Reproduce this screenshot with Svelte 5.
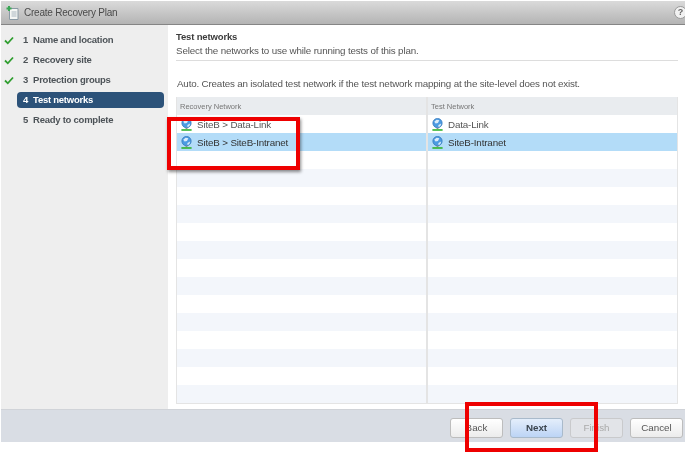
<script>
  const steps = [
    { n: 1, label: 'Name and location', done: true },
    { n: 2, label: 'Recovery site', done: true },
    { n: 3, label: 'Protection groups', done: true },
    { n: 4, label: 'Test networks', active: true },
    { n: 5, label: 'Ready to complete' }
  ];
  const rows = [
    ['SiteB > Data-Link', 'Data-Link'],
    ['SiteB > SiteB-Intranet', 'SiteB-Intranet'],
    ...Array(14).fill(null)
  ];
</script>

{#snippet net()}
  <svg class="net" width="13" height="13" viewBox="0 0 13 14">
    <circle cx="6.500" cy="5.500" r="5" fill="#4c9be2" stroke="#2f74ba" stroke-width="0.8" />
    <path d="M3 4 5.500 2 8.500 2.500 7 5.500 4.500 6ZM7.500 7.500l3-1.500-1 3-2 .8Z" fill="#dcecf9" />
    <rect x="5.500" y="10.500" width="2" height="1.500" fill="#8a8a8a" />
    <rect x="1" y="12" width="11" height="1.800" fill="#35b535" />
  </svg>
{/snippet}

<div class="page">
  <div class="window">
    <header class="title">
      <svg width="13" height="14" viewBox="0 0 13 14">
        <path d="M3.500 2.500h8.500v11h-8.500z" fill="#f4f6f4" stroke="#8a9aa5" />
        <path d="M5.500 6h5M5.500 8h5M5.500 10h5" stroke="#a9b6bf" />
        <path d="M3 0v5M0.500 2.500h5" stroke="#3aa655" stroke-width="2" />
      </svg>
      <span class="title-text">Create Recovery Plan</span>
      <span class="help">?</span>
    </header>
    <div class="body">
      <nav class="side">
        {#each steps as s}
          <div class="step" class:active={s.active}>
            <span class="check">
              {#if s.done}
                <svg width="10" height="9" viewBox="0 0 10 9"><path d="M1 4.500 3.800 7.300 9 1.500" fill="none" stroke="#2f9e2f" stroke-width="1.800" /></svg>
              {/if}
            </span>
            <span class="pill"><span class="num">{s.n}</span>{s.label}</span>
          </div>
        {/each}
      </nav>
      <main class="main">
        <h1>Test networks</h1>
        <p class="sub">Select the networks to use while running tests of this plan.</p>
        <p class="auto">Auto. Creates an isolated test network if the test network mapping at the site-level does not exist.</p>
        <div class="table">
          <div class="row head"><div class="cell">Recovery Network</div><div class="cell">Test Network</div></div>
          {#each rows as r, i}
            <div class="row" class:sel={i === 1} class:odd={i > 1 && i % 2 === 1}>
              <div class="cell">{#if r}{@render net()}{r[0]}{/if}</div>
              <div class="cell">{#if r}{@render net()}{r[1]}{/if}</div>
            </div>
          {/each}
        </div>
      </main>
    </div>
    <footer class="foot">
      <button>Back</button>
      <button class="primary">Next</button>
      <button disabled>Finish</button>
      <button>Cancel</button>
    </footer>
  </div>
  <div class="mark one"></div>
  <div class="mark two"></div>
</div>

<style>
  :global(body) { margin: 0; background: #fff; }
  .page {
    position: relative;
    width: 685px;
    height: 454px;
    overflow: hidden;
    padding: 1px 0 12px 1px;
    box-sizing: border-box;
    font-family: "Liberation Sans", Arial, sans-serif;
    color: #444;
    filter: blur(0.35px);
  }
  .window { display: flex; flex-direction: column; height: 441px; }
  .title {
    height: 24px;
    box-sizing: border-box;
    display: flex;
    align-items: center;
    padding-left: 5px;
    background: linear-gradient(#dadada, #b4b4b4);
    border-bottom: 1px solid #858585;
  }
  .title-text { margin-left: 5px; font-size: 10px; letter-spacing: -0.22px; color: #4a4a4a; }
  .help {
    margin-left: auto;
    width: 11px;
    height: 11px;
    border-radius: 50%;
    margin-right: -2px;
    background: #f1f1f1;
    border: 1px solid #999;
    font-size: 9px;
    font-weight: bold;
    line-height: 11px;
    text-align: center;
    color: #666;
  }
  .body { flex: 1; display: flex; min-height: 0; }
  .side {
    width: 167px;
    background: #eeeeee;
    padding-top: 5px;
    box-sizing: border-box;
  }
  .step { height: 20px; display: flex; align-items: center; }
  .check { width: 16px; display: flex; padding-left: 3px; box-sizing: border-box; }
  .pill {
    width: 147px;
    height: 16px;
    line-height: 16px;
    font-size: 9.500px;
    letter-spacing: -0.25px;
    font-weight: bold;
    color: #4d5358;
    padding-left: 6px;
    box-sizing: border-box;
    border-radius: 4px;
  }
  .num { margin-right: 5px; }
  .active .pill { background: #2c5279; color: #fff; }
  .main { flex: 1; padding: 6px 7px 0 8px; min-width: 0; }
  h1 { margin: 0; font-size: 9.500px; letter-spacing: -0.15px; font-weight: bold; color: #3c3c3c; line-height: 12px; }
  .sub {
    margin: 2px 0 0;
    font-size: 9.800px;
    letter-spacing: -0.15px;
    line-height: 12px;
    height: 15px;
    border-bottom: 1px solid #dddddd;
    color: #555;
  }
  .auto { margin: 17px 0 0 1px; font-size: 9.800px; letter-spacing: -0.17px; line-height: 12px; color: #555; }
  .table { margin-top: 7px; border: 1px solid #e4e4e4; border-top: 0; }
  .row { display: grid; grid-template-columns: 251px 1fr; height: 18px; background: #fff; }
  .row.odd { background: #f3f6fb; }
  .row.sel { background: #b3dcf8; }
  .row.head { background: #e9ecef; color: #777; }
  .cell {
    display: flex;
    align-items: center;
    padding-left: 3px;
    font-size: 9.800px;
    letter-spacing: -0.15px;
    color: #555;
    border-right: 2px solid #e4e4e4;
    min-width: 0;
    white-space: nowrap;
  }
  .cell:last-child { border-right: 0; }
  .sel .cell { color: #333; }
  .head .cell { font-size: 7.500px; letter-spacing: 0; color: #777; padding-left: 3px; }
  .net { margin: 1px 4px 0 0; flex: none; }
  .foot {
    height: 33px;
    box-sizing: border-box;
    background: #d9dde4;
    border-top: 1px solid #d0d3d8;
    display: flex;
    align-items: center;
    justify-content: flex-end;
    gap: 7px;
    padding: 3px 2px 0 0;
  }
  button {
    width: 53px;
    height: 20px;
    padding: 0;
    font: 9.800px "Liberation Sans", Arial, sans-serif;
    color: #555;
    border: 1px solid #bdbdbd;
    border-radius: 3px;
    background: linear-gradient(#ffffff, #ececec);
  }
  button.primary {
    background: linear-gradient(#e4eefb, #bcd4f5);
    border-color: #a9bacb;
    font-weight: bold;
    color: #3c4650;
  }
  button:disabled { background: #e2e4e8; color: #aaa; border-color: #c9cacc; }
  .mark {
    position: absolute;
    box-sizing: border-box;
    border: 4px solid #ee0000;
  }
  .mark.one {
    left: 167px; top: 117px; width: 133px; height: 53px;
    box-shadow: 1px 2px 3px rgba(0,0,0,0.45);
  }
  .mark.two {
    left: 465px; top: 402px; width: 133px; height: 50px;
  }
</style>
